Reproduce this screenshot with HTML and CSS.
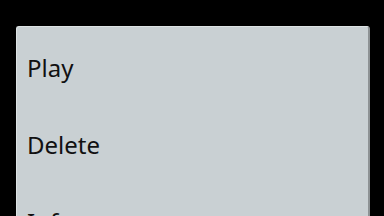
FILE: index.html
```html
<!DOCTYPE html>
<html lang="en">
<head>
    <meta charset="UTF-8">
    <title>Menu</title>
    <link rel="stylesheet" href="styles.css">
</head>
<body>
    <div class="dialog">
        <div class="item">Play</div>
        <div class="item">Delete</div>
        <div class="item">Info</div>
    </div>
</body>
</html>
```

FILE: styles.css
```css
html, body {
    margin: 0;
    padding: 0;
    background: #000;
    height: 100%;
    overflow: hidden;
}

body {
    font-family: 'Noto Sans', 'Open Sans', sans-serif;
    padding: 26px 0 0 16px;
}

.dialog {
    width: 351px;
    background: #c9d0d3;
    border-left: 1px solid #dde2e4;
    border-top: 1px solid #dde2e4;
    border-right: 2px solid #8d9294;
    border-radius: 3px 3px 0 0;
    padding-top: 2px;
}

.item {
    height: 77px;
    display: flex;
    align-items: center;
    padding-left: 10px;
    font-size: 24px;
    line-height: 24px;
    color: #111;
}
```
